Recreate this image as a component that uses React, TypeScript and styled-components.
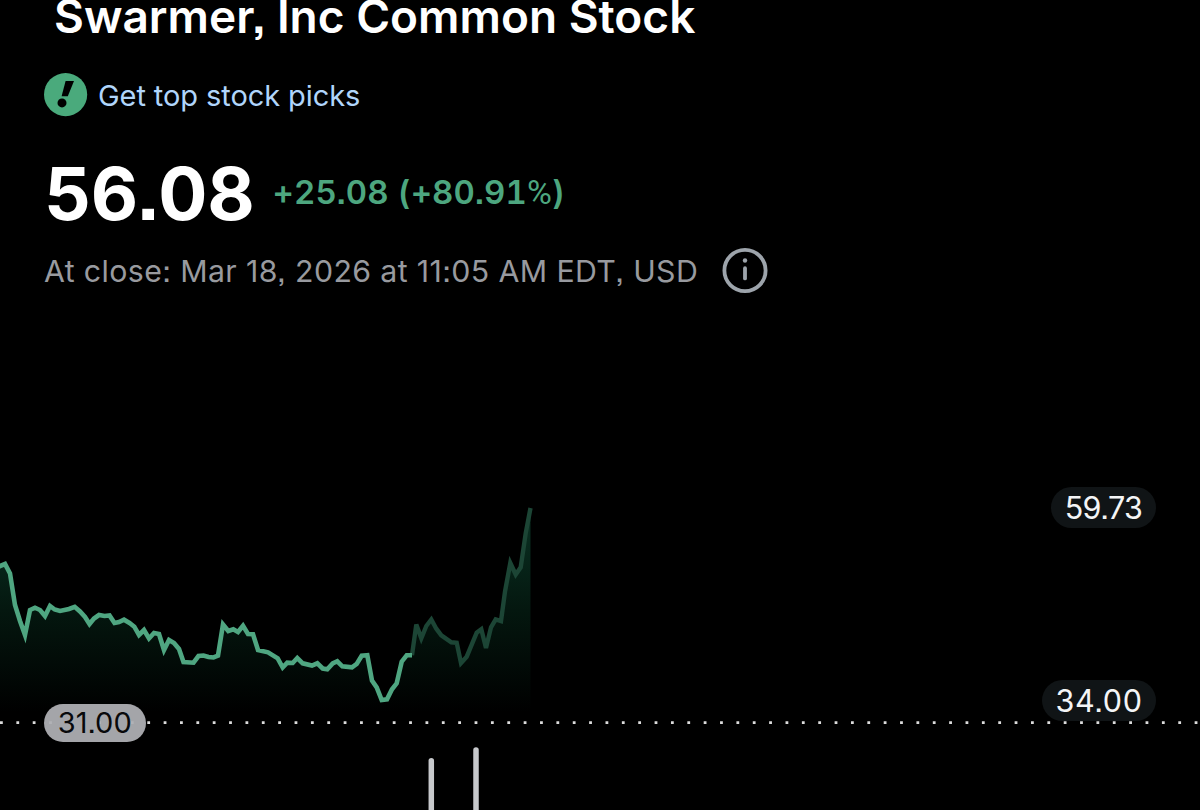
import styled, { createGlobalStyle } from 'styled-components';

const GlobalStyle = createGlobalStyle`
  * {
    box-sizing: border-box;
  }
  body {
    margin: 0;
    background-color: #000;
    font-family: Inter, 'Liberation Sans', sans-serif;
    font-feature-settings: 'ss07';
  }
`;

type Point = [number, number];

// Chart coordinates, y = 0 is the top edge of the chart area
const CHART_TOP = 480;
const DOT_GAP = 16.365;

const regularHours: Point[] = [
  [-5, 569], [0, 566], [5, 564], [10, 573.5], [15, 605], [20, 621], [25, 635],
  [30, 610], [35, 607.7], [40, 610], [45, 616], [50, 606], [54.7, 609.5],
  [60, 611], [69, 609], [74.7, 606.8], [80, 611.5], [85, 617], [89.5, 624],
  [94, 618.5], [99, 615], [104.5, 616], [109.5, 615.5], [114.5, 623],
  [119, 622], [124, 619.7], [129.5, 623], [134.3, 626.7], [139, 635],
  [144, 630], [149, 638.5], [154, 633], [159, 634], [164, 650], [169, 640],
  [174, 643], [179, 649], [183.5, 662], [193.5, 662.7], [198.5, 656],
  [203.5, 655.5], [208.5, 657], [213.5, 657.5], [218, 655.7], [223, 624.5],
  [228.3, 631], [233.3, 629.3], [238, 632], [243, 625.8], [248, 634],
  [253, 634.3], [258, 650], [268, 652.3], [277.7, 658.3], [282.7, 667.5],
  [287.3, 662.7], [292.7, 663], [297.3, 658], [302.7, 663.3], [312, 665.5],
  [317.3, 663.3], [322.7, 668.5], [327.3, 669.3], [332.7, 663.5],
  [337.3, 661.3], [342.3, 666.3], [352, 667.3], [356.7, 664], [361.7, 655.7],
  [367.3, 655.3], [372, 680.7], [376.7, 687.3], [381.7, 700], [387, 699.3],
  [392, 689.3], [396.7, 683.3], [401.7, 661.7], [406.7, 655.3], [412, 655.3],
];

const extendedHours: Point[] = [
  [412, 655.3], [416.3, 624.5], [421.3, 638.3], [426.3, 626], [431.3, 619.5],
  [436.3, 628.7], [441.3, 635.3], [451.3, 642.3], [456.7, 642.7], [461, 663],
  [466.7, 656.7], [476.7, 632.7], [481.3, 629.3], [486, 648], [491, 627.3],
  [495.7, 619.3], [501, 621], [505, 591.7], [510.3, 563], [515.7, 574.5],
  [520.7, 567.3], [525.7, 533.3], [530.5, 508],
];

const volumes = [
  { x: 431.3, top: 758 },
  { x: 476, top: 747.3 },
];

const toPoints = (points: Point[]) =>
  points.map(([x, y]) => `${x},${y - CHART_TOP}`).join(' ');

const PicksLogo = () => (
  <svg width="44" height="44" viewBox="0 0 44 44">
    <circle cx="21.6" cy="21.6" r="21.6" fill="#4aaa7c" />
    <path d="M21.6 8h8.4L23.8 23.2h-6.2z" fill="#000" />
    <circle cx="18" cy="29.9" r="4.5" fill="#000" />
  </svg>
);

const InfoIcon = () => (
  <svg width="46" height="46" viewBox="0 0 46 46">
    <circle cx="23" cy="22.5" r="20.6" fill="none" stroke="#9da4ab" strokeWidth="3.8" />
    <circle cx="23" cy="12.5" r="2.2" fill="#9da4ab" />
    <path d="M23 20.2v10.2" stroke="#9da4ab" strokeWidth="3.8" strokeLinecap="round" />
  </svg>
);

const PriceChart = () => (
  <svg width="1200" height="330" viewBox="0 0 1200 330">
    <defs>
      <linearGradient id="area" gradientUnits="userSpaceOnUse" x1="0" y1="28" x2="0" y2="232">
        <stop offset="0" stopColor="#0a3324" />
        <stop offset="0.5" stopColor="#04170f" />
        <stop offset="1" stopColor="#000" />
      </linearGradient>
    </defs>
    <polygon
      points={`-5,235 ${toPoints(regularHours)} ${toPoints(extendedHours)} 530.5,235`}
      fill="url(#area)"
    />
    <polyline points={toPoints(extendedHours)} fill="none" stroke="#1c4535" strokeWidth="4.4" />
    <polyline points={toPoints(regularHours)} fill="none" stroke="#4fa681" strokeWidth="4.6" />
    <line
      x1="0"
      x2="1200"
      y1="242.6"
      y2="242.6"
      stroke="#dcdcdc"
      strokeWidth="2.8"
      strokeDasharray={`2.8 ${DOT_GAP - 2.8}`}
    />
    {volumes.map(({ x, top }) => (
      <line
        key={x}
        x1={x}
        x2={x}
        y1={top - CHART_TOP + 2.8}
        y2="340"
        stroke="#c7c9cc"
        strokeWidth="5.5"
        strokeLinecap="round"
      />
    ))}
  </svg>
);

export default function App() {
  return (
    <>
      <GlobalStyle />
      <StyledPage>
        <StyledHeader>
          <StyledTitle>Swarmer, Inc Common Stock</StyledTitle>
          <StyledPicks>
            <PicksLogo />
            <StyledPicksText>Get top stock picks</StyledPicksText>
          </StyledPicks>
          <StyledPriceRow>
            <StyledPrice>56.08</StyledPrice>
            <StyledChange>
              +25.08 (+80.91<StyledPercent>%</StyledPercent>)
            </StyledChange>
          </StyledPriceRow>
          <StyledStatusRow>
            <StyledStatus>At close: Mar 18, 2026 at 11:05 AM EDT, USD</StyledStatus>
            <InfoIcon />
          </StyledStatusRow>
        </StyledHeader>
        <StyledChart>
          <PriceChart />
          <StyledLabel $left={1051} $top={7} $width={105} $spacing={-0.6}>59.73</StyledLabel>
          <StyledLabel $left={1042} $top={199.5} $width={114} $spacing={0.6}>34.00</StyledLabel>
          <StyledLabel $left={44} $top={224} $width={101.5} $previous>31.00</StyledLabel>
        </StyledChart>
      </StyledPage>
    </>
  );
}

// ANCHOR Page
const StyledPage = styled.main`
  width: 1200px;
  height: 810px;
  display: flex;
  flex-direction: column;
  overflow: hidden;
  background-color: #000;
`;

// ANCHOR Header
const StyledHeader = styled.header`
  height: 480px;
  flex: none;
  padding-left: 44px;
  white-space: nowrap;
`;

const StyledTitle = styled.h1`
  margin: -8px 0 0 10px;
  font-size: 46px;
  line-height: 48px;
  font-weight: 600;
  color: #fff;
`;

const StyledPicks = styled.div`
  display: flex;
  align-items: center;
  gap: 10px;
  height: 44px;
  margin-top: 32.5px;
`;

const StyledPicksText = styled.a`
  padding-top: 2px;
  font-size: 29px;
  line-height: 44px;
  letter-spacing: -0.08px;
  color: #b0d5fb;
`;

const StyledPriceRow = styled.div`
  display: flex;
  align-items: center;
  height: 74px;
  margin-top: 40px;
`;

const StyledPrice = styled.span`
  width: 228.5px;
  font-size: 73px;
  line-height: 74px;
  font-weight: 700;
  color: #fff;
`;

const StyledChange = styled.span`
  margin-top: -3px;
  font-size: 33px;
  line-height: 40px;
  font-weight: 600;
  font-feature-settings: 'tnum', 'ss07';
  letter-spacing: 0.1px;
  color: #4da67f;
`;

const StyledPercent = styled.span`
  font-family: Roboto, sans-serif;
  font-size: 34px;
  font-weight: 400;
`;

const StyledStatusRow = styled.div`
  display: flex;
  align-items: center;
  height: 46px;
  margin-top: 17px;
`;

const StyledStatus = styled.span`
  width: 678px;
  font-size: 30.3px;
  line-height: 46px;
  letter-spacing: 0.37px;
  color: #989a9f;
`;

// ANCHOR Chart
const StyledChart = styled.section`
  position: relative;
  height: 330px;

  svg {
    display: block;
  }
`;

interface LabelStyle {
  $left: number;
  $top: number;
  $width: number;
  $spacing?: number;
  $previous?: boolean;
}
const StyledLabel = styled.span<LabelStyle>`
  position: absolute;
  left: ${(p) => p.$left}px;
  top: ${(p) => p.$top}px;
  width: ${(p) => p.$width}px;
  height: ${(p) => (p.$previous ? 38 : 41)}px;
  line-height: ${(p) => (p.$previous ? 38 : 41)}px;
  letter-spacing: ${(p) => p.$spacing ?? 0}px;
  border-radius: 21px;
  text-align: center;
  font-size: ${(p) => (p.$previous ? 29 : 30.5)}px;
  background-color: ${(p) => (p.$previous ? 'rgba(174, 175, 180, 0.94)' : '#101416')};
  color: ${(p) => (p.$previous ? '#08090b' : '#f4f5f6')};
`;
